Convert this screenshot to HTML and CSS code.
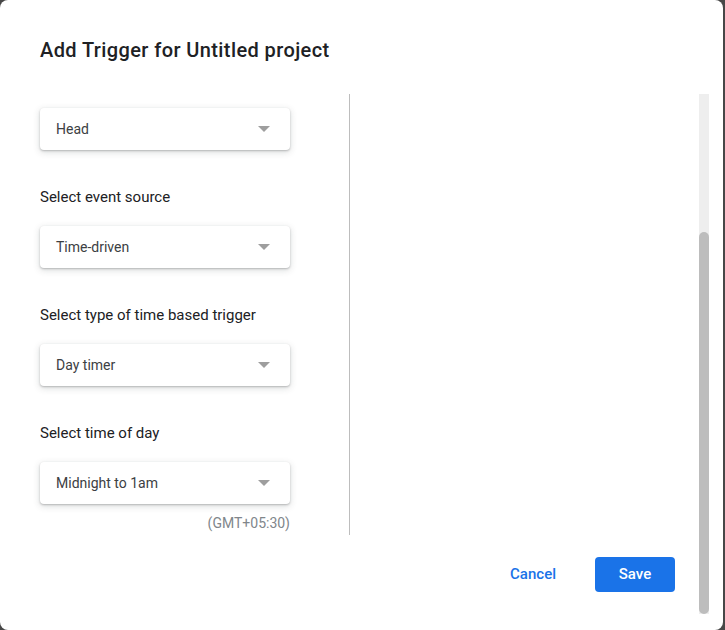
FILE: index.html
```html
<!DOCTYPE html>
<html lang="en">
<head>
  <meta charset="UTF-8" />
  <title>Add Trigger</title>
  <link rel="stylesheet" href="styles.css">
</head>
<body>
  <div class="dialog">
    <h2 class="title">Add Trigger for Untitled project</h2>

    <div class="body">
      <div class="options">
        <div class="select first"><span>Head</span><i class="caret"></i></div>

        <label class="field-label">Select event source</label>
        <div class="select"><span>Time-driven</span><i class="caret"></i></div>

        <label class="field-label">Select type of time based trigger</label>
        <div class="select"><span>Day timer</span><i class="caret"></i></div>

        <label class="field-label">Select time of day</label>
        <div class="select"><span>Midnight to 1am</span><i class="caret"></i></div>
        <div class="tz">(GMT+05:30)</div>
      </div>
      <div class="side"></div>
    </div>

    <div class="actions">
      <button class="btn-text">Cancel</button>
      <button class="btn-primary">Save</button>
    </div>

    <!-- dialog scrollbar -->
    <div class="scroll-track"><div class="scroll-thumb"></div></div>
  </div>
</body>
</html>
```

FILE: styles.css
```css
body {
  margin: 0;
  background: #474747;
  font-family: Roboto, "Liberation Sans", sans-serif;
  color: #202124;
}
.dialog {
  position: relative;
  width: 723px;
  height: 630px;
  background: #fff;
  border-radius: 8px;
  box-sizing: border-box;
  overflow: hidden;
}
.title {
  margin: 0;
  padding: 38px 40px 0;
  font-size: 20px;
  line-height: 24px;
  font-weight: 500;
  color: #202124;
  letter-spacing: 0.4px;
}
.body {
  display: flex;
  margin-top: 32px;
  height: 441px;
}
.options {
  width: 250px;
  padding: 14px 59px 0 40px;
  border-right: 1px solid #bdbdbd;
}
.side {
  flex: 1;
}
.select {
  display: flex;
  align-items: center;
  justify-content: space-between;
  height: 42px;
  padding: 0 20px 0 16px;
  border-radius: 4px;
  background: #fff;
  box-shadow: 0 1px 2px rgba(60,64,67,0.3), 0 2px 6px 1px rgba(60,64,67,0.15);
  font-size: 14px;
  color: #3c4043;
}
.caret {
  width: 0;
  height: 0;
  border-left: 6px solid transparent;
  border-right: 6px solid transparent;
  border-top: 6px solid #9e9e9e;
}
.field-label {
  display: block;
  margin: 37px 0 19px;
  font-size: 15px;
  line-height: 20px;
  color: #202124;
}
.tz {
  margin-top: 9px;
  text-align: right;
  font-size: 14px;
  line-height: 20px;
  color: #80868b;
}
.actions {
  display: flex;
  justify-content: flex-end;
  align-items: center;
  margin-top: 21px;
  padding-right: 48px;
}
.btn-text {
  height: 36px;
  padding: 0 16px;
  margin-right: 23px;
  border: none;
  background: none;
  font-family: inherit;
  font-size: 15px;
  font-weight: 500;
  color: #1a73e8;
  cursor: pointer;
}
.btn-primary {
  width: 80px;
  height: 35px;
  border: none;
  border-radius: 4px;
  background: #1a73e8;
  font-family: inherit;
  font-size: 15px;
  font-weight: 500;
  color: #fff;
  cursor: pointer;
}
.scroll-track {
  position: absolute;
  left: 699px;
  top: 94px;
  width: 10px;
  height: 520px;
  background: #eeeeee;
}
.scroll-thumb {
  margin-top: 138px;
  height: 382px;
  border-radius: 5px;
  background: #bdbdbd;
}
```
